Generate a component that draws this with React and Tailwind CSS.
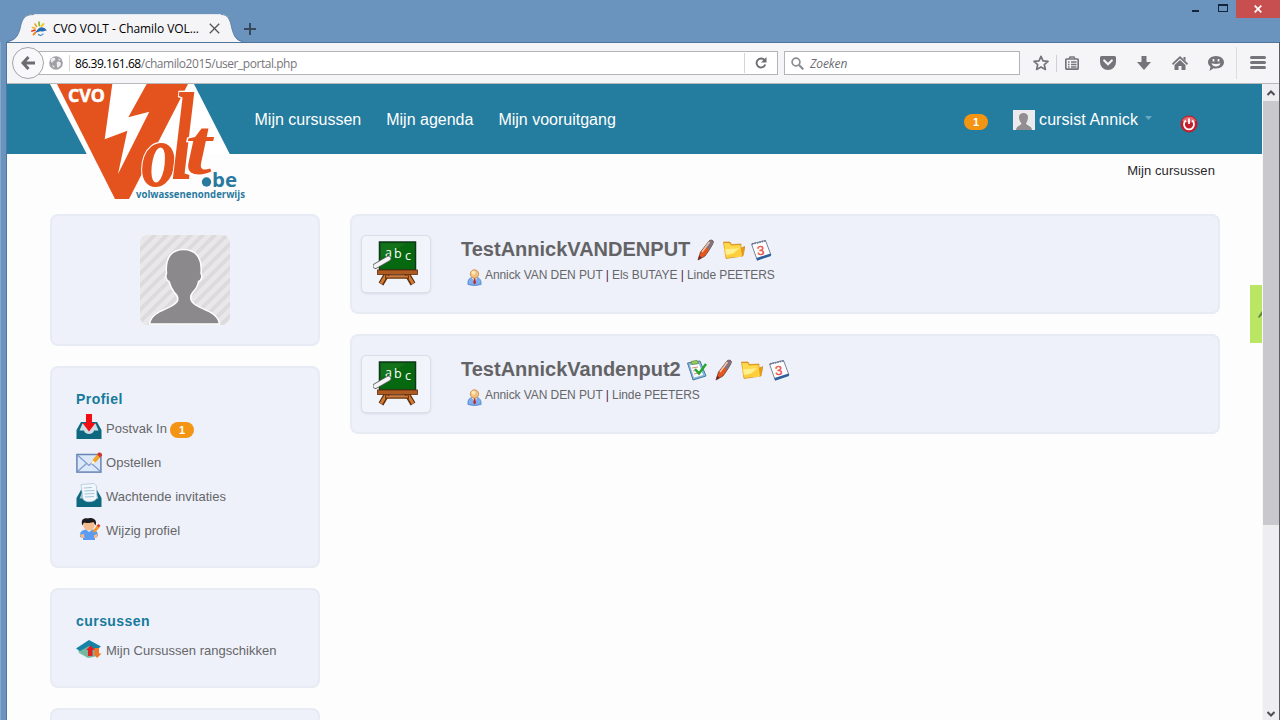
import React from "react";

const ui = "font-['Open_Sans','Noto_Sans',sans-serif]";

function TitleBar() {
  return (
    <div className="flex h-[42px] items-start bg-[#6a93bd]">
      <div className="ml-[7px] flex h-[42px] items-end">
        <svg width="27" height="28" viewBox="0 0 27 28" className="shrink-0">
          <path d="M0 28C8 27 11 22 13 15C15 5 17 0 27 0V28Z" fill="#f5f4f7" />
          <path d="M0 27.5C8 26.5 11 22 13 15C15 5 17 .5 27 .5" fill="none" stroke="#4f759d" strokeWidth="0.8" />
        </svg>
        <div className="flex h-[28px] w-[187px] items-center border-t border-[#dfe6ee] bg-[#f5f4f7]">
          <Favicon />
          <span className={"ml-[6px] w-[156px] whitespace-nowrap text-[12px] leading-none tracking-[-0.08px] text-black " + ui}>CVO VOLT - Chamilo VOL...</span>
          <svg width="11" height="11" viewBox="0 0 11 11" className="shrink-0" stroke="#555" strokeWidth="1.3"><path d="M.8.8L10.2 10.2M10.2.8L.8 10.2" /></svg>
        </div>
        <svg width="22" height="28" viewBox="0 0 22 28" className="shrink-0">
          <path d="M22 28C15 27 13 22 11 15C9 5 7 0 0 0V28Z" fill="#f5f4f7" />
          <path d="M22 27.5C15 26.5 13 22 11 15C9 5 7 .5 0 .5" fill="none" stroke="#4f759d" strokeWidth="0.8" />
        </svg>
      </div>
      <svg width="12" height="12" viewBox="0 0 12 12" className="mt-[23px] ml-[1px]" stroke="#37485c" strokeWidth="2"><path d="M6 0V12M0 6H12" /></svg>
      <div className="ml-auto flex h-[18px] items-start">
        <div className="mt-[10px] h-[2px] w-[7px] bg-[#14243a]" />
        <div className="mt-[4px] ml-[19px] h-[8px] w-[10px] border border-t-2 border-[#14243a]" />
        <div className="ml-[8px] flex h-[18px] w-[44px] items-center justify-center bg-[#c74f50]">
          <svg width="8" height="8" viewBox="0 0 8 8" stroke="#fff" strokeWidth="1.7"><path d="M.7.7L7.3 7.3M7.3.7L.7 7.3" /></svg>
        </div>
      </div>
    </div>
  );
}

function Favicon() {
  return (
    <svg width="16" height="16" viewBox="0 0 16 16" className="-ml-[3px] shrink-0" fill="none" strokeLinecap="round">
      <path d="M5.500 5.500L4 3" stroke="#f2a51c" strokeWidth="1.600" />
      <path d="M1.500 6.500L4 7.300" stroke="#f2b51c" strokeWidth="1.600" />
      <path d="M8.300 4.500L8 1.200" stroke="#8fbe2e" strokeWidth="1.800" />
      <path d="M10.500 5L12.500 3" stroke="#f3c81f" strokeWidth="2" />
      <path d="M1 10L4 9.200" stroke="#e0401f" strokeWidth="1.800" />
      <path d="M2.500 13.500L4.500 11.500" stroke="#f08a1c" strokeWidth="1.800" />
      <path d="M4.500 11.500C6 9 9 5.500 11 6.500C13 6.500 15.500 8 15.500 10C13 9 12.500 11 10.500 10.500C8.500 9.500 7 11.500 4.500 11.500Z" fill="#2a6cb0" />
      <path d="M7.500 13.500C9 15 11 14.500 12 13" stroke="#4c8bc6" strokeWidth="1.300" />
    </svg>
  );
}

function Toolbar() {
  return (
    <div className={"flex h-[42px] shrink-0 items-center border-t border-b border-t-[#4f759d] border-b-[#b9b8bd] bg-[#f5f4f7] " + ui}>
      <div className="relative z-10 ml-[5px] flex h-[32px] w-[32px] shrink-0 items-center justify-center rounded-full border border-[#a5a4a9] bg-[#f8f7fa]">
        <svg width="14" height="14" viewBox="0 0 14 14" fill="none" stroke="#6d6c72" strokeWidth="3"><path d="M7.5 1L2 7L7.5 13M2 7H14" /></svg>
      </div>
      <div className="-ml-[6px] flex h-[24px] w-[740px] shrink-0 items-center border border-[#b4b3b9] bg-white pl-[10px]">
        <svg width="14" height="14" viewBox="0 0 14 14"><circle cx="7" cy="7" r="6.8" fill="#a09fa4" /><path d="M2 3C4 1 6 1.500 6.500 3C6 5 3.500 5 3 7C2 6 1.500 4.500 2 3ZM8 6C10 5 12 6 12 8C11 11 9 12.500 8 11C8.500 9 7 8 8 6ZM9 2L12 4L10 4.500ZM3 9L5.500 10L5 12Z" fill="#eeedf0" /></svg>
        <div className="ml-[6px] h-[16px] w-px bg-[#d5d4d8]" />
        <span className="mt-[2px] ml-[5px] whitespace-nowrap text-[12px] tracking-[-0.46px] text-[#77767b]"><span className="text-black">86.39.161.68</span>/chamilo2015/user_portal.php</span>
        <div className="ml-auto flex h-[20px] w-[33px] items-center justify-center border-l border-[#d5d4d8]">
          <svg width="12" height="12" viewBox="0 0 12 12" fill="none" stroke="#6d6c72" strokeWidth="1.9"><path d="M9.600 3.200A4.500 4.500 0 1 0 10.300 7.500" /><path d="M11.500 0V5.500H6Z" fill="#6d6c72" stroke="none" /></svg>
        </div>
      </div>
      <div className="ml-[6px] flex h-[24px] w-[236px] shrink-0 items-center border border-[#b4b3b9] bg-white pl-[6px]">
        <svg width="13" height="13" viewBox="0 0 13 13" fill="none" stroke="#8d8c92"><circle cx="5" cy="5" r="3.900" strokeWidth="1.700" /><path d="M8 8L12.300 12.300" strokeWidth="2.200" /></svg>
        <span className="mt-[2px] ml-[6px] text-[12px] tracking-[-0.1px] text-[#6d6c72] italic">Zoeken</span>
      </div>
      <div className="flex items-center text-[#75747a]">
        <svg width="16" height="16" viewBox="0 0 16 16" className="ml-[13px]" fill="none" stroke="currentColor" strokeWidth="1.700" strokeLinejoin="round"><path d="M8 1.300L10 5.800L15 6.300L11.300 9.600L12.400 14.400L8 11.900L3.600 14.400L4.700 9.600L1 6.300L6 5.800Z" /></svg>
        <div className="ml-[7px] h-[17px] w-px bg-[#cfced3]" />
        <svg width="14" height="14" viewBox="0 0 14 14" className="ml-[8px]" fill="none" stroke="currentColor" strokeWidth="1.700"><rect x=".8" y="3" width="12.400" height="10.200" rx="1" /><path d="M4 3L5 1H9L10 3M3 6H4.500M6 6H11.500M3 8.500H4.500M6 8.500H11.500M3 11H4.500M6 11H11.500" strokeWidth="1.400" /></svg>
        <svg width="16" height="14" viewBox="0 0 16 14" className="ml-[21px]"><path d="M1.500 0H14.500Q16 0 16 1.500V6A8 8 0 0 1 0 6V1.500Q0 0 1.500 0Z" fill="currentColor" /><path d="M4.200 4.500L8 8.200L11.800 4.500" fill="none" stroke="#f5f4f7" strokeWidth="2.200" strokeLinecap="round" /></svg>
        <svg width="14" height="14" viewBox="0 0 14 14" className="ml-[21px]" fill="currentColor"><path d="M4.500 0H9.500V6H14L7 14L0 6H4.500Z" /></svg>
        <svg width="16" height="15" viewBox="0 0 16 15" className="ml-[21px]" fill="currentColor"><path d="M0 7.500L8 0L16 7.500L15 9L8 2.500L1 9Z" /><path d="M8 4L13.500 9V14H9.500V10H6.500V14H2.500V9ZM11.500 1H13.500V5L11.500 3Z" /></svg>
        <svg width="16" height="15" viewBox="0 0 16 15" className="ml-[20px]"><path d="M8 0C12.500 0 16 2.800 16 6.300C16 10 12.500 12.500 8 12.500C7 12.500 6.300 12.400 5.500 12.200L1.500 15L2.500 10.700C1 9.700 0 8.200 0 6.300C0 2.800 3.500 0 8 0Z" fill="currentColor" /><path d="M5.500 3V5.500M10.500 3V5.500" stroke="#f5f4f7" strokeWidth="1.800" /><path d="M3.500 7.200C6 8.200 10 8.200 12.500 7.200C11.500 11.500 4.500 11.500 3.500 7.200Z" fill="#f5f4f7" /></svg>
        <div className="ml-[12px] h-[32px] w-px bg-[#dddce1]" />
        <svg width="16" height="14" viewBox="0 0 16 14" className="ml-[13px]" stroke="currentColor" strokeWidth="3" strokeLinecap="round"><path d="M1.500 1.500H14.500M1.500 6.500H14.500M1.500 11.500H14.500" /></svg>
      </div>
    </div>
  );
}

function Logo() {
  const orange = "#e4531d";
  const glyph = { fontFamily: "'Liberation Serif', serif", fontStyle: "italic", fontWeight: 700 };
  return (
    <svg width="200" height="120" viewBox="50 84 200 120" className="absolute top-0 left-[43px] overflow-visible">
      <path d="M50 84H194L230 154.500H87Z" fill="#fff" />
      <path d="M57 84H188L129 199H115Z" fill={orange} />
      <path d="M112.300 84L104.700 139.300L127.300 130.700L118 174L149.300 111.700L128.300 117.300L146.700 84Z" fill="#fff" />
      <g fill={orange} stroke="#fff" strokeWidth="2.500" paintOrder="stroke" style={glyph}>
        <text transform="translate(141 186) scale(.78 1)" fontSize="92">o</text>
        <text transform="translate(171 179) scale(.68 1)" fontSize="124">l</text>
        <text transform="translate(185 174) scale(1.200 1)" fontSize="80">t</text>
      </g>
      <g style={{ fontFamily: "'Open Sans', sans-serif", fontWeight: 700 }}>
        <text x="68" y="102" fontSize="17" fill="#fff" stroke="#fff" strokeWidth=".5" textLength="37" lengthAdjust="spacingAndGlyphs">CVO</text>
        <circle cx="206.500" cy="182" r="4.700" fill="#2a7a9e" />
        <text x="212" y="187" fontSize="20" fill="#2a7a9e" textLength="25" lengthAdjust="spacingAndGlyphs">be</text>
        <text x="136" y="198" fontSize="10" fill="#2a7a9e" textLength="109" lengthAdjust="spacingAndGlyphs">volwassenenonderwijs</text>
      </g>
    </svg>
  );
}

function Badge({ className = "" }) {
  return <span className={"flex h-[16px] w-[24px] items-center justify-center rounded-full bg-[#f39412] text-[11px] leading-none font-bold text-white " + className}>1</span>;
}

function Header() {
  return (
    <header className="relative flex h-[70px] shrink-0 items-start bg-[#247c9e] text-[16px] leading-[20px] text-white">
      <Logo />
      <nav className="mt-[26px] ml-[247.500px] flex gap-[25px] whitespace-nowrap">
        <span>Mijn cursussen</span><span>Mijn agenda</span><span>Mijn vooruitgang</span>
      </nav>
      <div className="mr-[64px] ml-auto flex items-start">
        <Badge className="mt-[30px]" />
        <svg width="22" height="20" viewBox="0 0 22 20" className="mt-[26px] ml-[25px]"><rect width="22" height="20" fill="#eceaec" /><path d="M3 20C3 16 8 15.500 8.500 13.500C6.500 11 6 9 6 7C6 1.500 15 1.500 15 7C15 9 14.500 11 13 13.500C13.500 15.500 19 16 19 20Z" fill="#918d90" /></svg>
        <span className="mt-[26px] ml-[4px] whitespace-nowrap tracking-[0.08px]">cursist Annick</span>
        <svg width="7" height="4" viewBox="0 0 7 4" className="mt-[32px] ml-[7px]"><path d="M0 0H7L3.500 4Z" fill="#6aa9c1" /></svg>
        <svg width="18" height="18" viewBox="0 0 18 18" className="mt-[31px] ml-[28px]" fill="none">
          <circle cx="9" cy="9" r="8.500" fill="#c21d2a" /><path d="M2 6A8 8 0 0 1 16 6Q9 9 2 6Z" fill="#e06a70" />
          <path d="M5.800 5.500A5 5 0 1 0 12.200 5.500M9 3.500V9" stroke="#fff" strokeWidth="1.800" />
        </svg>
      </div>
    </header>
  );
}

function Card({ className = "", children }) {
  return <section className={"shrink-0 rounded-[8px] border-2 border-[#e6ebf4] bg-[#eef1f9] " + className}>{children}</section>;
}

function Avatar() {
  return (
    <svg width="90" height="90" viewBox="0 0 90 90">
      <defs>
        <pattern id="stripes" width="8.500" height="8.500" patternUnits="userSpaceOnUse" patternTransform="rotate(45)"><rect width="8.500" height="8.500" fill="#e9e7e9" /><rect width="3.800" height="8.500" fill="#dcdadd" /></pattern>
        <clipPath id="frame"><rect width="90" height="90" rx="8" /></clipPath>
      </defs>
      <g clipPath="url(#frame)">
        <rect width="90" height="90" fill="url(#stripes)" />
        <path d="M9.500 89C11 75 34 74 37.500 66C38.500 62 37 60 34 57C31 53 30 50 29 46.500C26.500 46 25 41 26.500 38.500C25 22 32 14.500 43.500 14.500C55 14.500 62.500 22 61 38.500C63 41 61 46 58.500 46.500C58 50 56 54 53 57C50.500 60 50 63 51.500 66C55 74 78 75 79.500 89Z" fill="#8b898b" stroke="#fff" strokeWidth="1.500" />
      </g>
    </svg>
  );
}

function Tray({ doc }) {
  return (
    <svg width="26" height="26" viewBox="0 0 26 26">
      <path d="M5 8H21L25.500 16V25H.5V16Z" fill="#0d6880" />
      <path d="M6.500 9.500H19.500L22.500 16.500H18C17.500 21 8.500 21 8 16.500H3.500Z" fill={doc ? "#a8c3cf" : "#cfdde6"} />
      {doc ? (
        <g><path d="M5 2.500L18 1.500L20.500 4L21 16C19 20.500 9 21 7 17Z" fill="#f2f7fb" stroke="#a9c6d8" strokeWidth=".8" /><path d="M8 6L16 5.500M8.300 9L18.500 8.500M8.500 12L18.500 11.500M9 15L18 14.500" stroke="#a4c5db" /></g>
      ) : (
        <path d="M10 0H16V9H19.500L13 17.500L6.500 9H10Z" fill="#f20d12" />
      )}
    </svg>
  );
}

function Compose() {
  return (
    <svg width="26" height="26" viewBox="0 0 26 26">
      <rect x=".9" y="6.500" width="24" height="17.600" fill="#dbe8fb" stroke="#6784b4" strokeWidth="1.500" />
      <path d="M2 7.500L13 17.500L24 7.500M2 23L10.500 15.500M24 23L15.500 15.500" fill="none" stroke="#7f9cc9" strokeWidth="1.200" />
      <path d="M15.500 16L16.500 12L22 5.500L25 8.500L19.500 14.500Z" fill="#efa42d" /><path d="M15.300 16.200L16.500 12L19.500 14.700Z" fill="#fff3d8" />
      <path d="M21 6.500L23 4.300Q26.500 5 26 7.500L24.200 9.500Z" fill="#d23430" />
    </svg>
  );
}

function EditUser() {
  return (
    <svg width="26" height="26" viewBox="0 0 26 26">
      <path d="M4 21C3.500 16 6 14 10 13.500H17C20 14 22 16 22 20L19 22V24H7V22Z" fill="#5b9cf2" />
      <path d="M4 18.500L8 18L8.500 22L5 21.500ZM18 19L22 18L20.500 22L18 22Z" fill="#f3b98a" />
      <path d="M10 13.500L13 16L16.500 13.500Z" fill="#f3f6fb" />
      <ellipse cx="13" cy="9" rx="5.700" ry="5.500" fill="#f4bd90" />
      <path d="M6.300 9.500C4 2 10 2 12 2.500C18 .5 21.500 5 19.500 9.500L17.500 6C13 7.500 9.500 7 8 6.500Z" fill="#1d1b1d" />
      <path d="M16.500 15.500L21 9.500L23.500 11.500L19 16.500Z" fill="#f09a25" /><path d="M20.500 9.500L22.500 8L24.500 9.500L23 11.500Z" fill="#dc3a2d" />
    </svg>
  );
}

function SortCourses() {
  return (
    <svg width="26" height="26" viewBox="0 0 26 26">
      <path d="M2 13L5 12V16L12 20V22L3 17Z" fill="#7cc0a8" />
      <path d="M5 12L13 9L21 13V20L13 22L5 17Z" fill="#78b6a0" />
      <path d="M0 12.500L13 4L25 10.500L20 14L13 10L4 15Z" fill="#1682a6" />
      <path d="M14.500 9.500L19 14H16.500V20H12V14H10Z" fill="#e21d20" />
      <path d="M18.500 12H23V17.500H25.500L21 22L17.500 17.500H18.500Z" fill="#f07421" />
    </svg>
  );
}

function MenuRow({ icon, label, badge }) {
  return (
    <li className="flex h-[34px] items-center">
      <span className="-mt-[5px]">{icon}</span>
      <span className="ml-[4px] whitespace-nowrap">{label}</span>
      {badge && <Badge className="mt-[2px] ml-[3px]" />}
    </li>
  );
}

function MenuCard({ title, className, children }) {
  return (
    <Card className={"pt-[23px] pl-[24px] text-[13px] tracking-[0.03px] text-[#66666a] " + className}>
      <h2 className="text-[14px] leading-[16px] font-bold tracking-[0.45px] text-[#167a9c]">{title}</h2>
      <ul className="mt-[5px]">{children}</ul>
    </Card>
  );
}

function Sidebar() {
  return (
    <aside className="flex w-[270px] shrink-0 flex-col gap-[20px]">
      <Card className="flex h-[132px] justify-center pt-[19px]"><Avatar /></Card>
      <MenuCard title="Profiel" className="h-[202px]">
        <MenuRow icon={<Tray />} label="Postvak In" badge />
        <MenuRow icon={<Compose />} label="Opstellen" />
        <MenuRow icon={<Tray doc />} label="Wachtende invitaties" />
        <MenuRow icon={<EditUser />} label="Wijzig profiel" />
      </MenuCard>
      <MenuCard title="cursussen" className="h-[100px]">
        <MenuRow icon={<SortCourses />} label="Mijn Cursussen rangschikken" />
      </MenuCard>
      <Card className="h-[60px]" />
    </aside>
  );
}

function Blackboard() {
  return (
    <svg width="46" height="46" viewBox="0 0 46 46" className="-mt-[2px]">
      <path d="M15 32L8 44M33 32L40 44" stroke="#5f2d0b" strokeWidth="5.500" />
      <path d="M15 32L8 43.500M33 32L40 43.500" stroke="#cf7a35" strokeWidth="3" />
      <path d="M12 37H36" stroke="#6b330e" strokeWidth="3.500" /><path d="M13 36.600H35" stroke="#cc7838" strokeWidth="1.800" />
      <rect x="6.500" y="2" width="36" height="28" fill="#07690f" stroke="#11371a" strokeWidth="1.500" />
      <path d="M8 18L33 3.500H8Z" fill="#1d7d25" opacity=".5" />
      <rect x="4.500" y="30" width="40" height="4.500" fill="#ad5b22" stroke="#632b0c" strokeWidth=".8" />
      <g fill="#fff" fontFamily="'Open Sans', sans-serif" fontSize="12.500"><text x="12" y="17">a</text><text x="21" y="17.500">b</text><text x="32" y="20">c</text></g>
      <path d="M2.500 26L15.500 18.500" stroke="#5b665f" strokeWidth="5.500" strokeLinecap="round" /><path d="M2.500 26L15.500 18.500" stroke="#f6f3f6" strokeWidth="4" strokeLinecap="round" />
    </svg>
  );
}

function Pen() {
  return (
    <svg width="22" height="22" viewBox="0 0 22 22">
      <path d="M3 21L5.500 13L14.500 1.500Q17.500 0 18.500 2.500Q18 6 10 17Z" fill="#e8561b" stroke="#5a4642" strokeWidth=".8" />
      <path d="M10 7.500L14.500 1.500Q18 .3 18.300 3L14 11Z" fill="#7b7584" /><path d="M7 13L14.500 3" stroke="#f7c3a3" strokeWidth="1.500" /><path d="M3 21L4.300 16.500L6.800 18.800Z" fill="#7c241c" />
    </svg>
  );
}

function Folder() {
  return (
    <svg width="22" height="22" viewBox="0 0 22 22">
      <path d="M.5 3L7 3L8.500 5.500L18 5V9L22 7.500L20 17L3 19.500Z" fill="#e89b17" stroke="#ce8511" strokeWidth=".6" />
      <path d="M1 4L6.500 4L8 6.500L17.500 6L18 18H3Z" fill="#ffd94b" /><path d="M1 9.500L17.500 8.500L19 17L3.500 19Z" fill="#fecf3c" /><path d="M2 10L16.500 9.300L10 14.500L3.500 16Z" fill="#fff08f" />
    </svg>
  );
}

function Calendar() {
  return (
    <svg width="22" height="22" viewBox="0 0 22 22">
      <path d="M1.500 5L15.500 1.500L21 16L7 20.500Z" fill="#fff" stroke="#7785a0" strokeWidth="1" /><path d="M6.500 19L20.500 14.500L21 17L7 21.700Z" fill="#2e5f9c" /><path d="M2 5L16 1.700" stroke="#6c7891" strokeWidth="1.800" strokeDasharray="1.500 1" />
      <text x="7" y="16" fontFamily="'Liberation Sans', sans-serif" fontSize="13" fill="#ee5148" stroke="#ee5148" strokeWidth=".4" transform="rotate(-5 10 11)">3</text>
    </svg>
  );
}

function Tasks() {
  return (
    <svg width="22" height="22" viewBox="0 0 22 22">
      <path d="M1.500 4L14 2L20 17L7 21Z" fill="#88b8da" stroke="#457b9e" strokeWidth="1" /><path d="M4 6L13 5L17 16L8 18.500Z" fill="#fff" />
      <path d="M6 9L12 8M7 12L10 11.500M8 15L12 14" stroke="#dc8583" /><path d="M5 2.500L11 1.300L12.500 4.500L6 5.500Z" fill="#9fcb56" stroke="#5a8a42" strokeWidth=".7" />
      <path d="M9 10L13 14.500L20 5" fill="none" stroke="#25a72c" strokeWidth="2.500" />
    </svg>
  );
}

function Teacher() {
  return (
    <svg width="15" height="17" viewBox="0 0 15 17">
      <path d="M1 15.500C.5 10 3 9 5.500 8.500H9.500C12.500 9 14.500 11 14 15.500Q7.500 17.500 1 15.500Z" fill="#7db0ee" stroke="#4a7fc6" strokeWidth=".8" /><path d="M5 9L7.500 13L10 9Z" fill="#fff" /><path d="M6.800 9H8.300L9 14L7.500 15.500L6.300 14Z" fill="#c2282c" />
      <circle cx="7.500" cy="5" r="4.200" fill="#f2c17e" stroke="#c28a48" strokeWidth=".8" /><circle cx="6.500" cy="3.700" r="2" fill="#ffe5b8" />
    </svg>
  );
}

function Course({ title, teachers, icons }) {
  return (
    <Card className="flex h-[100px] items-start pl-[9px]">
      <div className="mt-[19px] flex h-[58px] w-[70px] shrink-0 items-center justify-center rounded-[5px] border border-[#dadfe9] bg-[#f2f4fb] shadow-[0_1px_2px_rgba(90,100,130,0.15)]"><Blackboard /></div>
      <div className="mt-[20px] ml-[30px]">
        <div className="flex h-[26px] items-center gap-[6px]">
          <h3 className="-mr-px text-[20px] leading-[26px] font-bold whitespace-nowrap text-[#636366]">{title}</h3>
          <div className="mt-[2px] flex gap-[5.500px]">{icons}</div>
        </div>
        <div className="mt-[4px] ml-[6px] flex h-[20px] items-start text-[12px] leading-[15px] text-[#66666a]">
          <span className="mt-[3px]"><Teacher /></span>
          <p className="mt-[2px] ml-[3px] whitespace-nowrap tracking-[-0.08px]">{teachers.map((t, i) => <React.Fragment key={t}>{i > 0 && <span className="text-[#55204f]"> | </span>}{t}</React.Fragment>)}</p>
        </div>
      </div>
    </Card>
  );
}

function Scrollbar() {
  return (
    <div className="flex w-[17px] shrink-0 flex-col items-center border-l border-[#f8f7f9] bg-[#eeedf0]">
      <div className="flex h-[17px] items-center"><svg width="8" height="6" viewBox="0 0 8 6" fill="none" stroke="#505054" strokeWidth="2"><path d="M.5 5L4 1.500L7.500 5" /></svg></div>
      <div className="h-[424px] w-full bg-[#c9c8cc]" />
      <div className="mt-auto flex h-[13px] items-center"><svg width="8" height="6" viewBox="0 0 8 6" fill="none" stroke="#505054" strokeWidth="2"><path d="M.5 1L4 4.500L7.500 1" /></svg></div>
    </div>
  );
}

export default function App() {
  return (
    <div className="flex h-[720px] w-[1280px] flex-col overflow-hidden bg-[#6a93bd] font-['Liberation_Sans',Arial,sans-serif]">
      <TitleBar />
      <div className="flex min-h-0 flex-1 border-l border-[#86a8ca]">
        <div className="w-[6px] shrink-0 border-r border-[#50769f] bg-[#6a93bd]" />
        <div className="flex min-w-0 flex-1 flex-col border-r border-[#5c5b62]">
          <Toolbar />
          <div className="flex min-h-0 flex-1">
            <div className="relative flex min-w-0 flex-1 flex-col overflow-hidden bg-[#fefdfe]">
              <Header />
              <div className="flex h-[60px] shrink-0 justify-end pt-[9px] pr-[47px] text-[13px] leading-[16px] tracking-[0.08px] text-[#28282b]">Mijn cursussen</div>
              <div className="flex gap-[30px] pl-[43px]">
                <Sidebar />
                <main className="flex w-[870px] shrink-0 flex-col gap-[20px]">
                  <Course title="TestAnnickVANDENPUT" teachers={["Annick VAN DEN PUT", "Els BUTAYE", "Linde PEETERS"]} icons={<><Pen /><Folder /><Calendar /></>} />
                  <Course title="TestAnnickVandenput2" teachers={["Annick VAN DEN PUT", "Linde PEETERS"]} icons={<><Tasks /><Pen /><Folder /><Calendar /></>} />
                </main>
              </div>
              <div className="absolute top-[201px] right-0 flex h-[58px] w-[12px] items-center justify-end bg-[#bae664]"><svg width="4" height="10" viewBox="0 0 4 10"><path d="M0 8L4 2V6L1 9Z" fill="#668044" /></svg></div>
            </div>
            <Scrollbar />
          </div>
        </div>
      </div>
    </div>
  );
}
